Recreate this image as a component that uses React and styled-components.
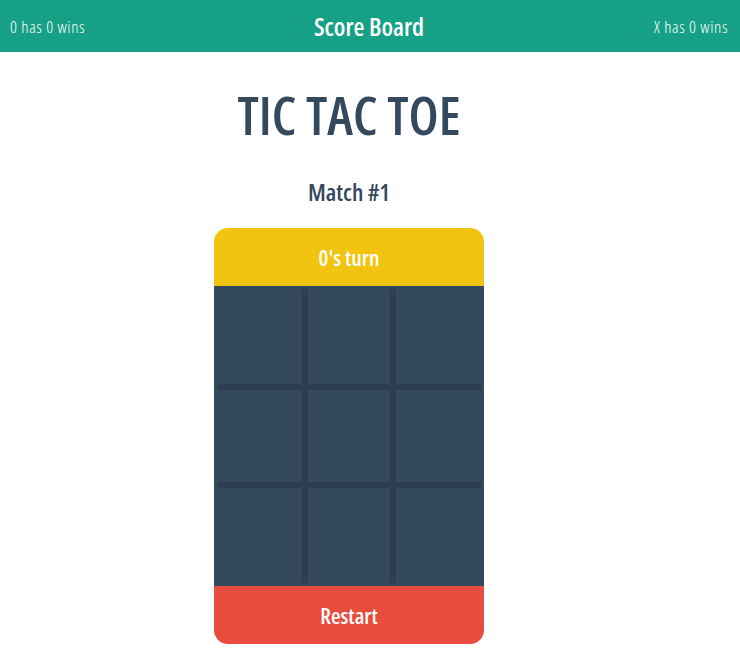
import React from 'react'
import styled, { createGlobalStyle } from 'styled-components'

const GlobalStyle = createGlobalStyle`
  body {
    margin: 0;
    background: #ffffff;
    font-family: "Open Sans", "Liberation Sans", sans-serif;
    font-stretch: 75%;
  }
`

const Header = styled.header`
  height: 52px;
  background: #16a085;
  color: #ffffff;
  display: flex;
  align-items: center;
  justify-content: space-between;
  padding: 0 12px 0 10px;
`

const Score = styled.span`
  font-size: 17px;
  font-weight: 300;
  font-stretch: 87.5%;
  letter-spacing: 0.6px;
  width: 120px;
  text-align: ${props => props.align || 'left'};
`

const BoardTitle = styled.h2`
  margin: 0;
  font-size: 25px;
  font-weight: 600;
`

const Main = styled.main`
  display: flex;
  flex-direction: column;
  align-items: center;
  padding-right: 42px;
`

const Title = styled.h1`
  margin: 34px 0 0 0;
  font-size: 53px;
  line-height: 58px;
  font-weight: 600;
  color: #34495e;
`

const Match = styled.h3`
  margin: 33px 0 0 0;
  font-size: 24px;
  line-height: 30px;
  font-weight: 600;
  color: #34495e;
`

const Card = styled.div`
  margin-top: 21px;
  width: 270px;
  border-radius: 14px;
  overflow: hidden;
`

const Bar = styled.div`
  height: 58px;
  display: flex;
  align-items: center;
  justify-content: center;
  background: ${props => props.color};
  color: #ffffff;
  font-size: 22px;
  font-weight: 600;
  cursor: ${props => (props.clickable ? 'pointer' : 'default')};
`

const Board = styled.div`
  background: #34495e;
  padding: 3px;
`

const Grid = styled.div`
  display: grid;
  grid-template-columns: 85px 82px 85px;
  grid-template-rows: 95px 92px 95px;
  gap: 6px;
  background: #2c3e50;
`

const Cell = styled.div`
  background: #34495e;
`

export default function App() {
  const cells = Array.from({ length: 9 })
  return (
    <>
      <GlobalStyle />
      <Header>
        <Score>0 has 0 wins</Score>
        <BoardTitle>Score Board</BoardTitle>
        <Score align="right">X has 0 wins</Score>
      </Header>
      <Main>
        <Title>TIC TAC TOE</Title>
        <Match>Match #1</Match>
        <Card>
          <Bar color="#f1c40f">0's turn</Bar>
          <Board>
            <Grid>
              {cells.map((_, i) => (
                <Cell key={i} />
              ))}
            </Grid>
          </Board>
          <Bar color="#e74c3c" clickable>Restart</Bar>
        </Card>
      </Main>
    </>
  )
}
